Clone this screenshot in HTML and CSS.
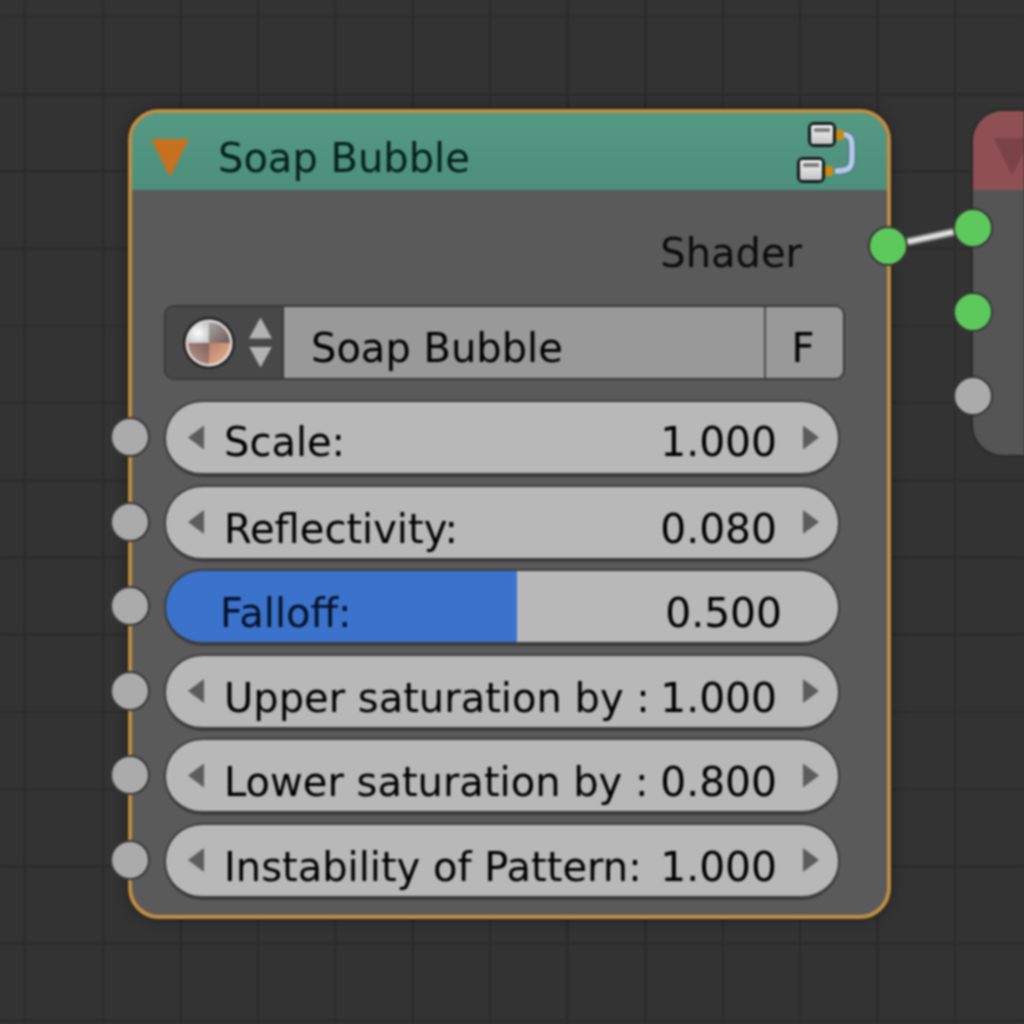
FILE: index.html

```html
<!DOCTYPE html>
<html lang="en">
<head>
  <meta charset="UTF-8">
  <title>Soap Bubble node</title>
  <link rel="stylesheet" href="styles.css">
</head>
<body>
  <div class="canvas">
    <svg class="link" width="100" height="40" viewBox="0 0 100 40">
      <path d="M8 28 L92 10" stroke="#8c8c8c" stroke-width="8" fill="none"/>
      <path d="M8 28 L92 10" stroke="#e2e2e2" stroke-width="4" fill="none"/>
    </svg>

    <div class="node node-main">
      <div class="node-header">
        <span class="collapse"></span>
        <span class="node-title">Soap Bubble</span>
        <svg class="tree-icon" width="70" height="70" viewBox="0 0 70 70">
          <defs>
            <linearGradient id="boxfill" x1="0" y1="0" x2="0" y2="1">
              <stop offset="0" stop-color="#f4f4f4"/>
              <stop offset="1" stop-color="#c4c4c4"/>
            </linearGradient>
          </defs>
          <path d="M50 16 C61 16 63 20 63 28 L63 40 C63 50 60 53 46 53" fill="none" stroke="#4d6f80" stroke-width="8"/>
          <path d="M50 16 C61 16 63 20 63 28 L63 40 C63 50 60 53 46 53" fill="none" stroke="#b4cbe9" stroke-width="5.5"/>
          <rect x="19" y="4" width="28" height="25" rx="6" fill="#101816"/>
          <rect x="22" y="7" width="22" height="19" rx="2" fill="url(#boxfill)"/>
          <rect x="25" y="10" width="16" height="4" fill="#7c7c7c"/>
          <rect x="47" y="12" width="8" height="10" rx="1" fill="#c98a12"/>
          <rect x="8" y="39" width="28" height="26" rx="6" fill="#101816"/>
          <rect x="11" y="42" width="22" height="20" rx="2" fill="url(#boxfill)"/>
          <rect x="14" y="45" width="16" height="4" fill="#7c7c7c"/>
          <rect x="36" y="48" width="8" height="10" rx="1" fill="#c98a12"/>
        </svg>
      </div>
      <div class="node-body">
        <div class="output-row">
          <span>Shader</span>
          <span class="socket socket-green socket-out"></span>
        </div>
        <div class="selector">
          <div class="selector-preview">
            <svg width="54" height="54" viewBox="0 0 54 54">
              <defs>
                <radialGradient id="tl" cx="0.5" cy="0.55" r="0.55">
                  <stop offset="0" stop-color="#ffffff"/>
                  <stop offset="1" stop-color="#c8c8c8"/>
                </radialGradient>
                <linearGradient id="tr" x1="0" y1="0" x2="1" y2="1">
                  <stop offset="0" stop-color="#a8a4a2"/>
                  <stop offset="1" stop-color="#6f5c58"/>
                </linearGradient>
                <linearGradient id="bl" x1="1" y1="0" x2="0" y2="1">
                  <stop offset="0" stop-color="#7f625b"/>
                  <stop offset="1" stop-color="#b8968c"/>
                </linearGradient>
                <linearGradient id="br" x1="0" y1="0" x2="1" y2="1">
                  <stop offset="0" stop-color="#b57f6c"/>
                  <stop offset="1" stop-color="#eeb48e"/>
                </linearGradient>
              </defs>
              <circle cx="27" cy="27" r="26" fill="#222222"/>
              <circle cx="27" cy="27" r="23.5" fill="#e6e0dc"/>
              <path d="M27 27 V5 A22 22 0 0 0 5 27 Z" fill="url(#tl)"/>
              <path d="M27 27 V6 A21 21 0 0 1 48 27 Z" fill="url(#tr)"/>
              <path d="M27 27 H6 A21 21 0 0 0 27 48 Z" fill="url(#bl)"/>
              <path d="M27 27 H48 A21 21 0 0 1 27 48 Z" fill="url(#br)"/>
            </svg>
            <div class="updown">
              <span class="tri tri-up"></span>
              <span class="tri tri-down"></span>
            </div>
          </div>
          <div class="selector-name">Soap Bubble</div>
          <div class="selector-f">F</div>
        </div>
        <div class="fields">
          <div class="field field-first">
            <span class="socket socket-grey"></span>
            <span class="tri tri-left"></span>
            <span class="field-label">Scale:</span>
            <span class="field-value">1.000</span>
            <span class="tri tri-right"></span>
          </div>
          <div class="field">
            <span class="socket socket-grey"></span>
            <span class="tri tri-left"></span>
            <span class="field-label">Reflectivity:</span>
            <span class="field-value">0.080</span>
            <span class="tri tri-right"></span>
          </div>
          <div class="field field-slider">
            <span class="socket socket-grey"></span>
            <span class="field-label">Falloff:</span>
            <span class="field-value">0.500</span>
          </div>
          <div class="field">
            <span class="socket socket-grey"></span>
            <span class="tri tri-left"></span>
            <span class="field-label">Upper saturation by :</span>
            <span class="field-value">1.000</span>
            <span class="tri tri-right"></span>
          </div>
          <div class="field">
            <span class="socket socket-grey"></span>
            <span class="tri tri-left"></span>
            <span class="field-label">Lower saturation by :</span>
            <span class="field-value">0.800</span>
            <span class="tri tri-right"></span>
          </div>
          <div class="field">
            <span class="socket socket-grey"></span>
            <span class="tri tri-left"></span>
            <span class="field-label">Instability of Pattern:</span>
            <span class="field-value">1.000</span>
            <span class="tri tri-right"></span>
          </div>
        </div>
      </div>
    </div>

    <div class="node node-side">
      <div class="side-header"><span class="collapse collapse-dim"></span></div>
      <span class="socket socket-green side-socket-1"></span>
      <span class="socket socket-green side-socket-2"></span>
      <span class="socket socket-grey side-socket-3"></span>
    </div>
  </div>
</body>
</html>
```

FILE: styles.css

```css
* {
  box-sizing: border-box;
}

body {
  margin: 0;
  background-color: #333333;
  font-family: "DejaVu Sans", sans-serif;
}

.canvas {
  position: relative;
  width: 1024px;
  height: 1024px;
  overflow: hidden;
  filter: blur(0.8px);
  background-color: #333333;
  background-image:
    repeating-linear-gradient(90deg, transparent 0, transparent 24px, #2b2b2b 24px, #2b2b2b 26.5px, transparent 26.5px, transparent 77.5px),
    repeating-linear-gradient(0deg, transparent 0, transparent 2px, #2c2c2c 2px, #2c2c2c 4.5px, transparent 4.5px, transparent 77.2px);
}

.node {
  position: absolute;
  top: 111px;
}

.node-main {
  top: 109px;
  left: 128px;
  width: 763px;
  height: 810px;
  border: 4px solid #c08f45;
  border-radius: 31px;
  background-color: #5a5a5a;
  box-shadow: 0 0 0 1px rgba(0, 0, 0, 0.3), 0 0 14px rgba(0, 0, 0, 0.35);
}

.node-header {
  display: flex;
  align-items: center;
  height: 77px;
  padding: 0 28px 0 19px;
  border-radius: 27px 27px 0 0;
  background: linear-gradient(#559a85, #4c8f7b);
}

.collapse {
  width: 38px;
  height: 38px;
  margin-top: 13px;
  background-color: #c7701f;
  clip-path: polygon(0 0, 100% 0, 50% 100%);
}

.collapse-dim {
  margin: 12px 0 0 20px;
  background-color: #7c4347;
}

.node-title {
  margin: 0 0 0 29px;
  padding-top: 12px;
  font-size: 40px;
  color: #06201a;
}

.tree-icon {
  margin: 2px 0 0 auto;
}

.node-body {
  padding: 0 0 0 33px;
  color: #000000;
  font-size: 40px;
}

.output-row {
  position: relative;
  display: flex;
  justify-content: flex-end;
  align-items: center;
  height: 115px;
  padding: 10px 85px 0 0;
  color: #0a0a0a;
}

.socket {
  position: absolute;
  width: 40px;
  height: 40px;
  border: 2px solid #363636;
  border-radius: 50%;
}

.socket-green {
  background-color: #5dc95d;
}

.socket-grey {
  background-color: #ababab;
}

.socket-out {
  top: 36px;
  right: -21px;
}

.selector {
  display: flex;
  width: 681px;
  height: 75px;
  margin-left: -1px;
  border: 2px solid #393939;
  border-radius: 10px;
  overflow: hidden;
}

.selector-preview {
  display: flex;
  align-items: center;
  width: 116px;
  padding: 0 0 0 16px;
  background-color: #484848;
}

.updown {
  display: flex;
  flex-direction: column;
  gap: 8px;
  margin-left: 13px;
}

.selector-name {
  display: flex;
  align-items: center;
  flex: 1;
  padding: 10px 0 0 27px;
  background-color: #999999;
  border-left: 2px solid #393939;
}

.selector-f {
  display: flex;
  align-items: center;
  justify-content: center;
  width: 79px;
  padding: 10px 3px 0 0;
  background-color: #999999;
  border-left: 2px solid #4a4a4a;
}

.tri {
  display: block;
  flex: none;
}

.tri-up,
.tri-down {
  width: 23px;
  height: 21px;
  background-color: #b3b3b3;
}

.tri-up {
  clip-path: polygon(50% 0, 100% 100%, 0 100%);
}

.tri-down {
  clip-path: polygon(0 0, 100% 0, 50% 100%);
}

.tri-left,
.tri-right {
  width: 16px;
  height: 24px;
  background-color: #5c5c5c;
}

.tri-left {
  clip-path: polygon(100% 0, 100% 100%, 0 50%);
}

.tri-right {
  clip-path: polygon(0 0, 100% 50%, 0 100%);
}

.fields {
  display: flex;
  flex-direction: column;
  gap: 7.5px;
  width: 676px;
  margin: 20px 0 0 -1px;
}

.field {
  position: relative;
  display: flex;
  align-items: center;
  height: 77px;
  padding: 0 19px 0 22px;
  border: 2px solid #3c3c3c;
  border-bottom-width: 4px;
  border-radius: 38px;
  background-color: #b8b8b8;
}

.field .socket {
  top: 15px;
  left: -56px;
}

.field-label {
  margin-left: 20px;
  padding-top: 13px;
}

.field-value {
  margin: 0 26px 0 auto;
  padding-top: 13px;
  font-size: 40.8px;
}

.field-first .field-label,
.field-first .field-value {
  padding-top: 9px;
}

.field-slider {
  padding: 0 56px 0 54px;
  background-image: linear-gradient(90deg, #3b73cc 52.2%, transparent 52.2%);
  color: #061228;
}

.field-slider .field-value {
  margin-right: 0;
  color: #000000;
}

.field-slider .field-label {
  margin-left: 0;
}

.node-side {
  left: 973px;
  width: 200px;
  height: 344px;
  border-radius: 30px;
  background-color: #555555;
  box-shadow: 0 0 0 2px #2a2a2a;
}

.side-header {
  display: flex;
  align-items: center;
  height: 79px;
  border-radius: 30px 30px 0 0;
  background-color: #8f5054;
}

.side-socket-1 {
  top: 97px;
  left: -20px;
}

.side-socket-2 {
  top: 181px;
  left: -20px;
}

.side-socket-3 {
  top: 265px;
  left: -20px;
}

.link {
  position: absolute;
  top: 218px;
  left: 880px;
}
```
